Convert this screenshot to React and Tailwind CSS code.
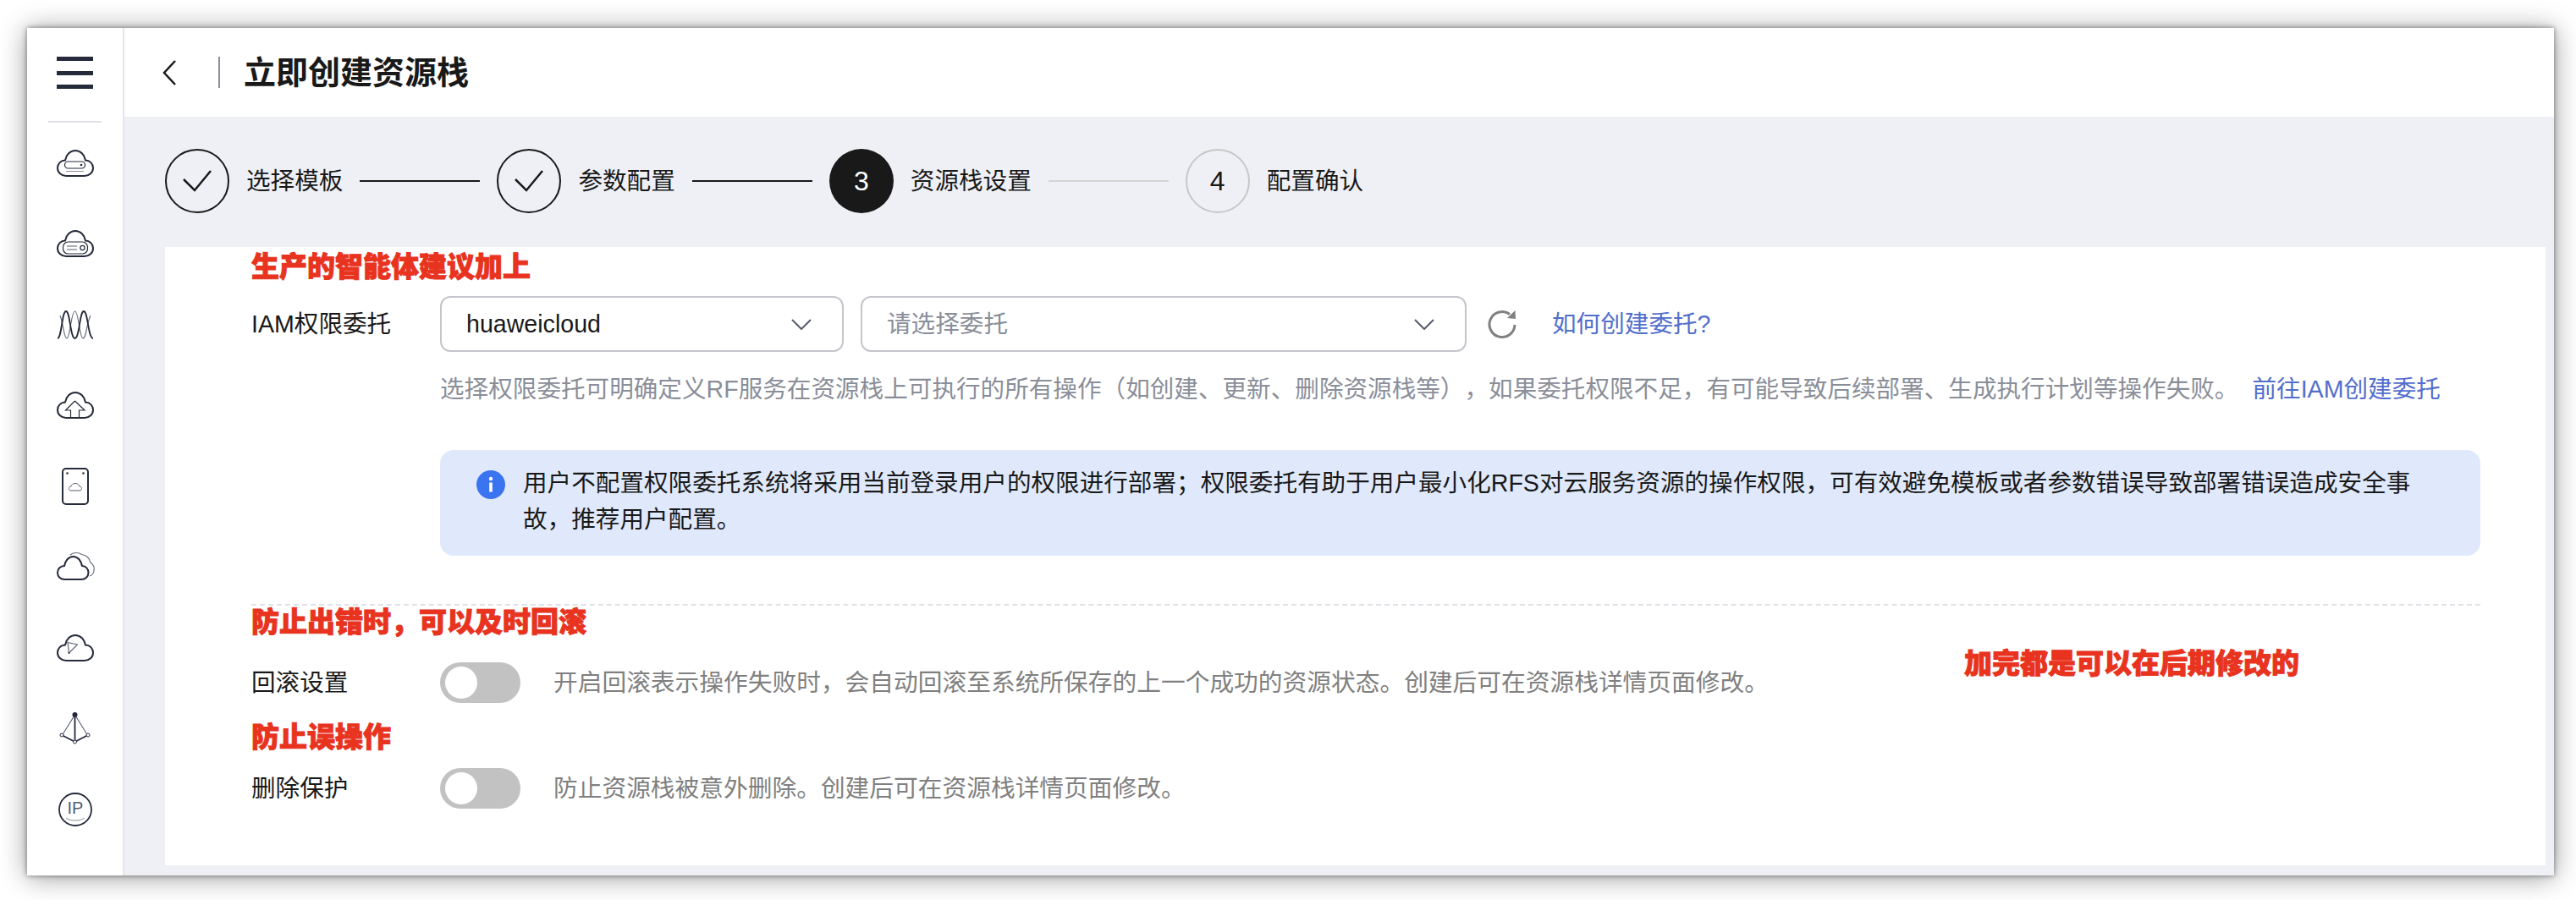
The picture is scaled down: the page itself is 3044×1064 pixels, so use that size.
import React from 'react'

const CLOUD = 'M11 31C5.5 31 1 27 1 21.5C1 16.5 5 12.5 10 12.5C11 6 16 1 22 1C28 1 33 6 34 12.5C39 12.5 43 16.5 43 21.5C43 27 38.5 31 33 31Z'

function Cloud({ children, w = 44, h = 32 }) {
    return (
        <svg width={w} height={h} viewBox={`0 0 ${w} ${h}`} fill="none" stroke="#252b3a" strokeWidth="2" className="overflow-visible">
            <path d={CLOUD} />
            {children}
        </svg>
    )
}

const icons = [
    <Cloud key="1">
        <rect x="9.5" y="14" width="24" height="8" rx="4" strokeWidth="1.2" />
        <circle cx="29" cy="18" r="1.3" fill="#252b3a" stroke="none" />
        <path d="M11 25.5H32" strokeWidth="1" stroke="#8a8e99" />
    </Cloud>,
    <Cloud key="2">
        <rect x="7.5" y="14" width="29" height="14" rx="6" strokeWidth="1.2" />
        <path d="M12 19H24M12 23H24" strokeWidth="1.2" stroke="#575d6c" />
        <circle cx="30.5" cy="21" r="2.6" strokeWidth="1.2" />
    </Cloud>,
    <svg key="3" width="44" height="34" viewBox="0 0 44 34" fill="none" className="overflow-visible">
        <path d="M4 6C8 16 8.5 33 12 33C16 33 17 1 21.5 1C26 1 27 33 31 33C35 33 35 16 40 6" stroke="#6a6f7d" strokeWidth="1.2" />
        <path d="M1 33C6 33 6 1 11 1C16 1 16 33 21.5 33C27 33 27 1 32 1C37 1 37 33 43 33" stroke="#252b3a" strokeWidth="1.8" />
    </svg>,
    <Cloud key="4">
        <path d="M21.5 11L10.5 22H16.5V31M21.5 11L33 22H26.5V31" strokeWidth="1.2" />
    </Cloud>,
    <svg key="5" width="32" height="44" viewBox="0 0 32 44" fill="none" stroke="#252b3a" strokeWidth="2">
        <rect x="1" y="1" width="30" height="42" rx="4" />
        <circle cx="6.5" cy="6.5" r="1.3" fill="#252b3a" stroke="none" />
        <circle cx="25.5" cy="6.5" r="1.3" fill="#252b3a" stroke="none" />
        <path d="M11 27C9 27 8.5 25.5 8.5 24.5C8.5 23 9.5 22 11 22C11.5 20 13.5 18.5 16 18.5C18.5 18.5 20.5 20 21 22C22.5 22 23.5 23 23.5 24.5C23.5 25.5 23 27 21 27Z" strokeWidth="1" stroke="#575d6c" />
    </svg>,
    <svg key="6" width="44" height="32" viewBox="0 0 44 32" fill="none" stroke="#252b3a" strokeWidth="2" className="overflow-visible">
        <path d="M9.5 31C4.5 31 1 27.5 1 23C1 18.5 4.5 15 9 15C10 9 14 4 19.5 4C25 4 29 9 30 15C34.5 15 37.5 18.5 37.5 23C37.5 27.5 34 31 29 31Z" />
        <path d="M16 2C19 -1 26 -1.5 29.5 1.5C35 2 39 6 39.5 10.5C43 13 45 17 44 21C43.5 24 42 26 39 27" strokeWidth="1.2" stroke="#6a6f7d" />
    </svg>,
    <Cloud key="7">
        <path d="M13 9.5L24.5 12L14.5 22Z" strokeWidth="1.1" stroke="#575d6c" />
        <circle cx="14.5" cy="22" r="1" fill="#252b3a" stroke="none" />
    </Cloud>,
    <svg key="8" width="38" height="38" viewBox="0 0 38 38" fill="none" stroke="#252b3a" className="overflow-visible">
        <path d="M18.5 3L3 28M18.5 3L34 28" strokeWidth="1.1" stroke="#575d6c" />
        <path d="M18.5 3V35M3 27L18.5 35L34 27" strokeWidth="1.8" />
        <circle cx="18.5" cy="3" r="3" fill="#252b3a" stroke="none" />
        <circle cx="3" cy="27" r="2" fill="#fff" strokeWidth="1" />
        <circle cx="18.5" cy="35" r="2" fill="#fff" strokeWidth="1" />
        <circle cx="34" cy="27" r="2" fill="#fff" strokeWidth="1" />
    </svg>,
    <svg key="9" width="40" height="40" viewBox="0 0 40 40" fill="none" stroke="#252b3a">
        <circle cx="20" cy="20" r="19" strokeWidth="1.8" />
        <text x="20" y="25" textAnchor="middle" fontSize="20" fontFamily="Liberation Sans" fill="#575d6c" stroke="none">IP</text>
        <path d="M9 30C14 34 26 34 31 30" strokeWidth="1" stroke="#8a8e99" />
    </svg>,
]

function Sidebar() {
    return (
        <aside className="w-[115px] shrink-0 flex flex-col items-center border-r-2 border-[#e4e5eb] bg-white pt-[34px]">
            <div className="w-[43px] h-[38px] flex flex-col justify-between">
                <span className="h-[5px] bg-[#252b3a]" />
                <span className="h-[5px] bg-[#252b3a]" />
                <span className="h-[5px] bg-[#252b3a]" />
            </div>
            <div className="w-[63px] h-[2px] bg-[#dfe1e6] mt-[38px]" />
            {icons.map((icon, i) => (
                <div key={i} className="h-[95.5px] w-full flex items-center justify-center">
                    {icon}
                </div>
            ))}
        </aside>
    )
}

function Step({ state, n, label }) {
    let circle = 'border-2 border-[#191919] text-[#191919]'
    if (state === 'current') circle = 'bg-[#191919] text-white'
    if (state === 'todo') circle = 'border-2 border-[#c7c7c7] text-[#191919]'
    return (
        <div className="flex items-center gap-x-5">
            <div className={`w-[76px] h-[76px] rounded-full flex items-center justify-center text-[32px] ${circle}`}>
                {state === 'done' ? (
                    <svg width="34" height="26" viewBox="0 0 34 26" fill="none" stroke="#191919" strokeWidth="2.5">
                        <path d="M1 11L14 24L33 1" />
                    </svg>
                ) : n}
            </div>
            <span className="text-[28.6px] leading-10 text-[#191919]">{label}</span>
        </div>
    )
}

function Connector({ done }) {
    return <div className={`w-[142px] h-[2px] mx-5 ${done ? 'bg-[#191919]' : 'bg-[#d4d4d4]'}`} />
}

function Chevron() {
    return (
        <svg width="24" height="13" viewBox="0 0 24 13" fill="none" stroke="#575d6c" strokeWidth="2">
            <path d="M1 1L12 12L23 1" />
        </svg>
    )
}

function Select({ value, placeholder, className }) {
    return (
        <div className={`h-[66px] rounded-xl border-2 border-[#c4c6cc] bg-white flex items-center justify-between pl-[29px] pr-[36px] ${className}`}>
            <span className={value ? 'text-[#191919]' : 'text-[#8a8e99]'}>{value || placeholder}</span>
            <Chevron />
        </div>
    )
}

function Note({ children, className = '' }) {
    return <div className={`h-10 leading-10 text-[33px] font-black text-[#e8331f] [-webkit-text-stroke:1px_#e8331f] ${className}`}>{children}</div>
}

function Toggle() {
    return (
        <div className="w-[95px] h-[48px] rounded-full bg-[#c2c2c2] flex items-center pl-[6px] shrink-0">
            <div className="w-[38px] h-[38px] rounded-full bg-white" />
        </div>
    )
}

function SwitchRow({ label, text, className = '' }) {
    return (
        <div className={`flex items-center h-[48px] ${className}`}>
            <div className="w-[223px] text-[#191919]">{label}</div>
            <Toggle />
            <div className="ml-[39px] text-[28.72px] text-[#808080]">{text}</div>
        </div>
    )
}

function App() {
    return (
        <div className="w-[3044px] h-[1064px] bg-white pl-[32px] pt-[33px] overflow-hidden font-['Liberation_Sans','Noto_Sans_CJK_SC',sans-serif] text-[28.6px] leading-10 [text-spacing-trim:space-all]">
            <div className="w-[2986px] h-[1002px] flex shadow-[0_0_6px_rgba(0,0,0,0.45),0_2px_30px_rgba(0,0,0,0.4)]">
                <Sidebar />
                <main className="flex-1 flex flex-col bg-[#eff0f5]">
                    <header className="h-[105px] shrink-0 bg-white flex items-center pl-[45px]">
                        <svg width="16" height="30" viewBox="0 0 16 30" fill="none" stroke="#191919" strokeWidth="2.5">
                            <path d="M15 1L2 15L15 29" />
                        </svg>
                        <div className="w-[2px] h-[37px] bg-[#8a8e99] ml-[50px]" />
                        <h1 className="ml-[28px] text-[38px] leading-[50px] font-semibold text-[#191919]">立即创建资源栈</h1>
                    </header>
                    <div className="h-[154px] shrink-0 flex items-center pl-[48px] pb-[2px]">
                        <Step state="done" label="选择模板" />
                        <Connector done />
                        <Step state="done" label="参数配置" />
                        <Connector done />
                        <Step state="current" n="3" label="资源栈设置" />
                        <Connector />
                        <Step state="todo" n="4" label="配置确认" />
                    </div>
                    <section className="relative h-[731px] ml-[48px] mr-[10px] bg-white pl-[102px] pr-[77px] pt-[4px]">
                        <Note>生产的智能体建议加上</Note>
                        <div className="flex items-center mt-[14px]">
                            <div className="w-[223px] text-[#191919]">IAM权限委托</div>
                            <Select className="w-[477px]" value="huaweicloud" />
                            <Select className="w-[716px] ml-5" placeholder="请选择委托" />
                            <svg className="ml-[24px]" width="36" height="36" viewBox="0 0 36 36" fill="none" stroke="#808080" strokeWidth="3">
                                <path d="M27 6.5A15 15 0 1 0 33 19" />
                                <path d="M33.5 2L34 12L24 11Z" fill="#808080" stroke="none" />
                            </svg>
                            <a className="ml-[41px] text-[#526ecc]">如何创建委托?</a>
                        </div>
                        <p className="ml-[223px] mt-[24px] text-[#8a8e99] whitespace-nowrap">
                            选择权限委托可明确定义RF服务在资源栈上可执行的所有操作（如创建、更新、删除资源栈等），如果委托权限不足，有可能导致后续部署、生成执行计划等操作失败。
                            <a className="ml-4 text-[#526ecc]">前往IAM创建委托</a>
                        </p>
                        <div className="ml-[223px] mt-[52px] h-[125px] rounded-2xl bg-[#e0e9fb] flex pl-[43px] pr-[60px] pt-[18px] text-[#191919]">
                            <svg className="shrink-0 mt-[6px]" width="34" height="34" viewBox="0 0 34 34">
                                <circle cx="17" cy="17" r="17" fill="#3b74f0" />
                                <circle cx="17" cy="10" r="2.2" fill="#fff" />
                                <rect x="15.2" y="14.5" width="3.6" height="11" fill="#fff" />
                            </svg>
                            <p className="ml-[21px] leading-[43px]">
                                用户不配置权限委托系统将采用当前登录用户的权限进行部署；权限委托有助于用户最小化RFS对云服务资源的操作权限，可有效避免模板或者参数错误导致部署错误造成安全事故，推荐用户配置。
                            </p>
                        </div>
                        <div className="mt-[57px] border-t-2 border-dashed border-[#dfe1e6]" />
                        <Note>防止出错时，可以及时回滚</Note>
                        <SwitchRow className="mt-[27px]" label="回滚设置" text="开启回滚表示操作失败时，会自动回滚至系统所保存的上一个成功的资源状态。创建后可在资源栈详情页面修改。" />
                        <Note className="mt-[21px]">防止误操作</Note>
                        <SwitchRow className="mt-[16px]" label="删除保护" text="防止资源栈被意外删除。创建后可在资源栈详情页面修改。" />
                        <Note className="absolute left-[2126px] top-[473px]">加完都是可以在后期修改的</Note>
                    </section>
                </main>
            </div>
        </div>
    )
}

export default App
